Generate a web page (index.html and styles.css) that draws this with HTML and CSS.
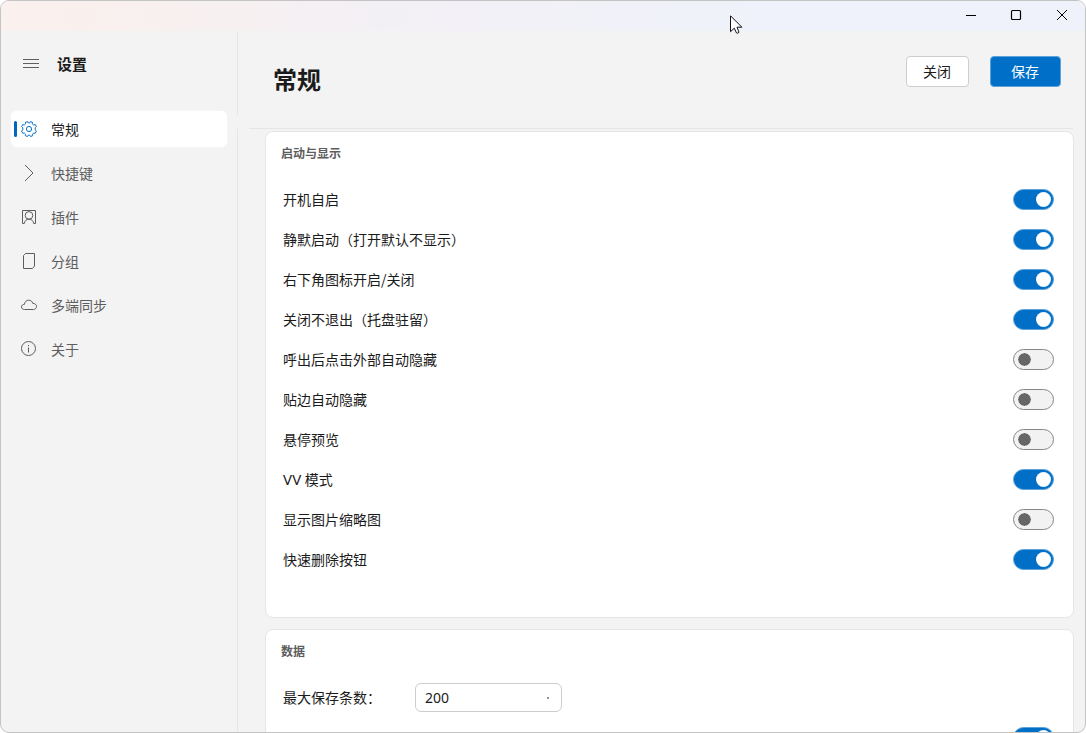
FILE: index.html
```html
<!DOCTYPE html>
<html lang="zh-CN">
<head>
<meta charset="utf-8">
<title>设置</title>
<link rel="stylesheet" href="styles.css">
</head>
<body>
<div class="window">
  <header class="titlebar">
    <svg class="caption" width="45" height="30" viewBox="0 0 45 30"><path d="M17 14.500h10" stroke="#000" fill="none"/></svg>
    <svg class="caption" width="46" height="30" viewBox="0 0 46 30"><rect x="17.500" y="9.500" width="9" height="9" rx="1" stroke="#000" stroke-width="1.200" fill="none"/></svg>
    <svg class="caption" width="45" height="30" viewBox="0 0 45 30"><path d="M17 9l10 10M27 9l-10 10" stroke="#000" fill="none"/></svg>
  </header>
  <div class="body">
    <aside class="sidebar">
      <div class="brand">
        <svg width="16" height="12" viewBox="0 0 16 12"><path d="M0 1.500h16M0 5.500h16M0 9.500h16" stroke="#5f5f63" fill="none"/></svg>
        <span>设置</span>
      </div>
      <nav class="nav">
        <a class="nav-item active">
          <svg class="icon" viewBox="0 0 16 16"><path d="M6.700 .6L7.200 1.900H8.800L9.300 .6L11.500 1.300L11.300 2.900L12.700 4L14.200 3.500L15.400 5.500L14.200 6.600V8.900L15.400 10.100L14.300 12.200L12.700 12L11.500 13.200L11.700 14.700L9.500 15.500L8.700 14.100H7.300L6.500 15.500L4.300 14.700L4.500 13.200L3.300 12L1.700 12.200L.6 10.100L1.800 8.900V6.700L.6 5.600L1.700 3.600L3.300 4L4.600 2.900L4.400 1.300Z"/><circle cx="8" cy="8" r="2.600"/></svg>
          <span>常规</span>
        </a>
        <a class="nav-item">
          <svg class="icon" viewBox="0 0 16 16"><path d="M4 0l8 8-8 8"/></svg>
          <span>快捷键</span>
        </a>
        <a class="nav-item">
          <svg class="icon" viewBox="0 0 16 16"><path d="M3.300 14.500H1.500V1.500h13v13h-1.800M3.300 14.500C3.700 11.800 5.300 10.200 8 10.200s4.300 1.600 4.700 4.300"/><circle cx="8" cy="6.400" r="3.800"/></svg>
          <span>插件</span>
        </a>
        <a class="nav-item">
          <svg class="icon" viewBox="0 0 16 16"><path d="M4.500 .5h9v12.500l-2 2.500h-9V2.500z"/></svg>
          <span>分组</span>
        </a>
        <a class="nav-item">
          <svg class="icon" viewBox="0 0 16 16"><path d="M3.500 12.500C1.700 12.500 .5 11.300 .5 9.900S1.700 7.300 3.500 7.300C3.700 4.800 5.500 3.200 7.800 3.200c2 0 3.500 1.200 4 3.200 2.200-.1 3.700 1.300 3.700 3s-1.300 3.100-3 3.100z"/></svg>
          <span>多端同步</span>
        </a>
        <a class="nav-item">
          <svg class="icon" viewBox="0 0 16 16"><circle cx="7.500" cy="7.500" r="7"/><path d="M7.500 6.500v5M7.500 4v1.200"/></svg>
          <span>关于</span>
        </a>
      </nav>
    </aside>
    <main class="main">
      <div class="page-head">
        <h1>常规</h1>
        <div class="actions">
          <button class="btn">关闭</button>
          <button class="btn primary">保存</button>
        </div>
      </div>
      <section class="card general">
        <h2>启动与显示</h2>
        <div class="row"><span>开机自启</span><i class="toggle on"></i></div>
        <div class="row"><span>静默启动（打开默认不显示）</span><i class="toggle on"></i></div>
        <div class="row"><span>右下角图标开启/关闭</span><i class="toggle on"></i></div>
        <div class="row"><span>关闭不退出（托盘驻留）</span><i class="toggle on"></i></div>
        <div class="row"><span>呼出后点击外部自动隐藏</span><i class="toggle"></i></div>
        <div class="row"><span>贴边自动隐藏</span><i class="toggle"></i></div>
        <div class="row"><span>悬停预览</span><i class="toggle"></i></div>
        <div class="row"><span><b class="latin">VV</b> 模式</span><i class="toggle on"></i></div>
        <div class="row"><span>显示图片缩略图</span><i class="toggle"></i></div>
        <div class="row"><span>快速删除按钮</span><i class="toggle on"></i></div>
      </section>
      <section class="card data">
        <h2>数据</h2>
        <div class="field"><span class="field-label">最大保存条数：</span><div class="select"><span>200</span><i class="dot"></i></div></div>
        <div class="row"><span></span><i class="toggle on"></i></div>
      </section>
    </main>
  </div>
</div>
<svg class="cursor" width="14" height="21" viewBox="0 0 14 21"><path d="M.5 .8V16.700L4.300 13.200L6.500 18Q7.600 18.800 9 17.300L7 12.200H11.900Z" fill="#fff" stroke="#101018"/></svg>
</body>
</html>
```
FILE: styles.css
```css
* { box-sizing: border-box; }

body {
  margin: 0;
  background: #fff;
  color: #1b1b1b;
  font: 14px/20px "Noto Sans CJK SC", sans-serif;
}

.window {
  display: flex;
  flex-direction: column;
  height: 733px;
  overflow: hidden;
  border: 1px solid #c3c3c3;
  border-radius: 9px;
  background: #f3f3f3;
}

.titlebar {
  display: flex;
  flex: none;
  justify-content: flex-end;
  height: 30px;
  background: linear-gradient(90deg, #faf0ed 0%, #f8f0ef 15%, #f3f0f5 35%, #eff2fa 70%, #eff2fa 100%);
}

.caption { display: block; }

.body { display: flex; flex: 1; min-height: 0; }

.sidebar {
  flex: none;
  width: 237px;
  padding: 0 10px;
  background: linear-gradient(#e5e5e5 84px, transparent 84px, transparent 98px, #e5e5e5 98px) right / 1px 100% no-repeat;
}

.brand {
  display: flex;
  align-items: center;
  gap: 18px;
  height: 66px;
  padding-left: 12px;
  font-size: 15px;
  font-weight: 700;
}

.nav { display: grid; gap: 8px; padding-top: 14px; }

.nav-item {
  display: flex;
  align-items: flex-start;
  gap: 14px;
  width: 216px;
  height: 36px;
  padding: 8px 0 0 10px;
  border-radius: 6px;
  color: #5d5d5d;
}

.nav-item.active {
  padding-left: 3px;
  gap: 4px;
  background: #fff;
  box-shadow: 0 0 0 0.5px #fafafa;
  color: #1b1b1b;
}

.nav-item.active::before {
  width: 3px;
  height: 16px;
  margin: 2px 0 0;
  border-radius: 2px;
  background: #0067c0;
  content: "";
}

.nav-item.active span { margin-left: 10px; }

.icon {
  flex: none;
  width: 16px;
  height: 16px;
  margin-top: 2px;
  fill: none;
  stroke: currentColor;
  stroke-width: 1;
}

.active .icon { stroke: #0870c6; }

.main {
  flex: 1;
  min-width: 0;
  padding: 0 11px 0 27px;
}

.page-head {
  display: flex;
  justify-content: space-between;
  height: 98px;
  margin: 0 1px 2px -16px;
  padding: 25px 12px 0 24px;
  border-bottom: 1px solid #e5e5e5;
}

h1 {
  margin: 5px 0 0;
  font-size: 24px;
  line-height: 36px;
  font-weight: 700;
}

.actions { display: flex; gap: 21px; }

.btn {
  width: 63px;
  height: 31px;
  padding: 0 1px 1px 0;
  border: 1px solid #cdcdcd;
  border-radius: 4px;
  background: #fff;
  color: #1b1b1b;
  font: inherit;
}

.btn.primary {
  width: 71px;
  border-color: #5ca3d9;
  background: #006fc7;
  color: #fff;
}

.card {
  border: 1px solid #e5e5e5;
  border-radius: 8px;
  background: #fff;
  padding: 11px 19px 0 17px;
}

.general { height: 487px; }
.data { height: 180px; margin-top: 11px; }

h2 {
  margin: 0 0 0 -2px;
  color: #5d5d5d;
  font-size: 12px;
  line-height: 20px;
  font-weight: 700;
}

.general h2 { margin-bottom: 16px; }

.row {
  display: flex;
  align-items: center;
  justify-content: space-between;
  height: 40px;
}

.latin { font: 15px "Noto Sans", sans-serif; letter-spacing: 0.3px; }

.toggle {
  display: flex;
  align-items: center;
  width: 41px;
  height: 21px;
  padding-left: 3px;
  border: 1px solid #878787;
  border-radius: 11px;
  background: #f2f2f2;
}

.toggle::before {
  width: 13px;
  height: 13px;
  margin-left: -0.5px;
  border: 0.5px solid #f2f2f2;
  border-radius: 50%;
  background: #666;
  background-clip: padding-box;
  content: "";
}

.toggle.on {
  padding-left: 22px;
  border-color: #5ca3d9;
  background: #006fc7;
}

.toggle.on::before {
  width: 15px;
  height: 15px;
  margin-left: 0;
  border: 0;
  background: #fff;
}

.field {
  display: flex;
  align-items: center;
  height: 29px;
  margin: 22px 0 5px;
}

.field-label { width: 132px; margin-top: -2px; white-space: nowrap; }

.select {
  display: flex;
  align-items: center;
  justify-content: space-between;
  width: 147px;
  height: 29px;
  padding: 0 12px 0 9px;
  border: 1px solid #cdcdcd;
  border-radius: 6px;
  font-family: "Noto Sans", sans-serif;
}

.dot { width: 2px; height: 2px; background: #8796aa; }

.cursor { position: absolute; left: 730px; top: 15px; }
```
